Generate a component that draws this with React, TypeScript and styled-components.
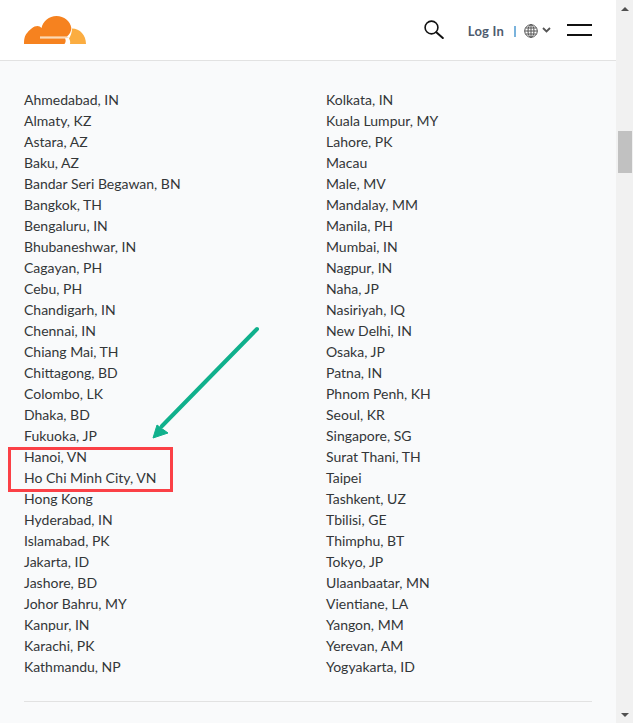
import React from 'react';
import styled, { createGlobalStyle } from 'styled-components';

const leftCities = [
  'Ahmedabad, IN', 'Almaty, KZ', 'Astara, AZ', 'Baku, AZ', 'Bandar Seri Begawan, BN',
  'Bangkok, TH', 'Bengaluru, IN', 'Bhubaneshwar, IN', 'Cagayan, PH', 'Cebu, PH',
  'Chandigarh, IN', 'Chennai, IN', 'Chiang Mai, TH', 'Chittagong, BD', 'Colombo, LK',
  'Dhaka, BD', 'Fukuoka, JP', 'Hanoi, VN', 'Ho Chi Minh City, VN', 'Hong Kong',
  'Hyderabad, IN', 'Islamabad, PK', 'Jakarta, ID', 'Jashore, BD', 'Johor Bahru, MY',
  'Kanpur, IN', 'Karachi, PK', 'Kathmandu, NP',
];
const rightCities = [
  'Kolkata, IN', 'Kuala Lumpur, MY', 'Lahore, PK', 'Macau', 'Male, MV', 'Mandalay, MM',
  'Manila, PH', 'Mumbai, IN', 'Nagpur, IN', 'Naha, JP', 'Nasiriyah, IQ', 'New Delhi, IN',
  'Osaka, JP', 'Patna, IN', 'Phnom Penh, KH', 'Seoul, KR', 'Singapore, SG', 'Surat Thani, TH',
  'Taipei', 'Tashkent, UZ', 'Tbilisi, GE', 'Thimphu, BT', 'Tokyo, JP', 'Ulaanbaatar, MN',
  'Vientiane, LA', 'Yangon, MM', 'Yerevan, AM', 'Yogyakarta, ID',
];

const GlobalStyle = createGlobalStyle`
  html, body {
    margin: 0;
    height: 100%;
    overflow: hidden;
  }
  body {
    font-family: Lato, "Open Sans", sans-serif;
    color: #333638;
  }
`;

const Viewport = styled.div`
  display: flex;
  height: 723px;
  width: 633px;
  position: relative;
  overflow: hidden;
`;

const Page = styled.div`
  flex: 1;
  min-width: 0;
  background: #f9fafb;
`;

const Header = styled.header`
  display: flex;
  align-items: center;
  height: 60px;
  padding: 0 24px;
  background: #fff;
  border-bottom: 1px solid #e2e2e2;
`;

const Logo = styled.svg`
  width: 62px;
  height: 28px;
`;

const Actions = styled.div`
  margin-left: auto;
  display: flex;
  align-items: center;
`;

const SearchIcon = styled.svg`
  width: 20px;
  height: 19px;
  margin-right: 24px;
  margin-top: -2px;
`;

const LogIn = styled.span`
  font-size: 13px;
  font-weight: 700;
  letter-spacing: 0.2px;
  color: #4e5b6e;
  margin-top: 1px;
`;

const Separator = styled.span`
  width: 2px;
  height: 11px;
  margin: 3px 8px 0 10px;
  background: #7ab3dc;
`;

const GlobeIcon = styled.svg`
  width: 14px;
  height: 14px;
  margin-top: 1px;
`;

const ChevronIcon = styled.svg`
  width: 9px;
  height: 6px;
  margin-left: 4px;
`;

const MenuButton = styled.div`
  display: flex;
  flex-direction: column;
  gap: 8px;
  width: 25px;
  margin-left: 16px;
`;

const MenuLine = styled.span`
  height: 2px;
  background: #111;
`;

const Content = styled.main`
  padding: 28px 24px 0;
`;

const Columns = styled.div`
  display: grid;
  grid-template-columns: 302px 1fr;
  padding-bottom: 24px;
  border-bottom: 1px solid #e2e2e2;
`;

const CityList = styled.ul`
  list-style: none;
  margin: 0;
  padding: 0;
`;

const City = styled.li`
  height: 21px;
  font-size: 14px;
  line-height: 21px;
  white-space: nowrap;
`;

const Scrollbar = styled.div`
  flex: none;
  width: 17px;
  display: flex;
  flex-direction: column;
  background: #f1f1f1;
`;

const ScrollButton = styled.div`
  flex: none;
  height: 17px;
  display: flex;
  align-items: center;
  justify-content: center;
`;

const ScrollArrow = styled.span<{ $down?: boolean }>`
  width: 0;
  height: 0;
  border-left: 4px solid transparent;
  border-right: 4px solid transparent;
  ${(p) =>
    p.$down ? 'border-top: 4px solid #505050;' : 'border-bottom: 4px solid #505050;'}
`;

const ScrollTrack = styled.div`
  flex: 1;
  padding: 114px 1px 0 2px;
`;

const ScrollThumb = styled.div`
  height: 42px;
  background: #c1c1c1;
`;

const Highlight = styled.div`
  position: absolute;
  left: 8px;
  top: 447px;
  width: 159px;
  height: 39px;
  border: 3px solid #fb4046;
`;

const Annotation = styled.svg`
  position: absolute;
  left: 140px;
  top: 320px;
  width: 130px;
  height: 130px;
`;

export default function App() {
  return (
    <Viewport>
      <GlobalStyle />
      <Page>
        <Header>
          <Logo viewBox="0 0 62 28">
            <path
              fill="#fbad41"
              d="M48 12.500C56 12.500 62 19 62 28H46C46.500 26 46 24 45 22.500C46.500 20 48 17 48 12.500z"
            />
            <path fill="#fcd9b4" d="M16 20.500H43L45 21.500L41 22.500H16z" />
            <path
              fill="#f6821f"
              d="M0 28C0 22 1 19 3.500 16.500C6 13.500 9.500 10 13.500 10C15 10 16.500 10.800 17.500 12C19 5 25 0 32.500 0C40 0 46.500 5 47.300 12C47.500 15 45.500 18.500 43 20.500H16V22.500H41C42 24 42 26 40.500 28z"
            />
          </Logo>
          <Actions>
            <SearchIcon viewBox="0 0 20 19" fill="none" stroke="#111" strokeLinecap="round">
              <circle cx="7.500" cy="7.500" r="6.400" strokeWidth="1.600" />
              <path d="M12.300 12.300l6.500 5.800" strokeWidth="2" />
            </SearchIcon>
            <LogIn>Log In</LogIn>
            <Separator />
            <GlobeIcon viewBox="0 0 14 14" fill="none" stroke="#555" strokeWidth="1">
              <circle cx="7" cy="7" r="6.300" />
              <ellipse cx="7" cy="7" rx="3" ry="6.300" />
              <path d="M7 .7v12.600M.7 7h12.600M1.500 4h11M1.500 10h11" />
            </GlobeIcon>
            <ChevronIcon viewBox="0 0 9 6" fill="none" stroke="#555" strokeWidth="1.800">
              <path d="M1 1l3.500 3.500L8 1" />
            </ChevronIcon>
            <MenuButton>
              <MenuLine />
              <MenuLine />
            </MenuButton>
          </Actions>
        </Header>
        <Content>
          <Columns>
            <CityList>
              {leftCities.map((city) => (
                <City key={city}>{city}</City>
              ))}
            </CityList>
            <CityList>
              {rightCities.map((city) => (
                <City key={city}>{city}</City>
              ))}
            </CityList>
          </Columns>
        </Content>
      </Page>
      <Scrollbar>
        <ScrollButton>
          <ScrollArrow />
        </ScrollButton>
        <ScrollTrack>
          <ScrollThumb />
        </ScrollTrack>
        <ScrollButton>
          <ScrollArrow $down />
        </ScrollButton>
      </Scrollbar>
      <Highlight />
      <Annotation viewBox="0 0 130 130">
        <path d="M117 9L22 106" fill="none" stroke="#10b08c" strokeWidth="4" strokeLinecap="round" />
        <path d="M13 118L17 105L28 113z" fill="#10b08c" stroke="#10b08c" strokeWidth="1" />
      </Annotation>
    </Viewport>
  );
}
